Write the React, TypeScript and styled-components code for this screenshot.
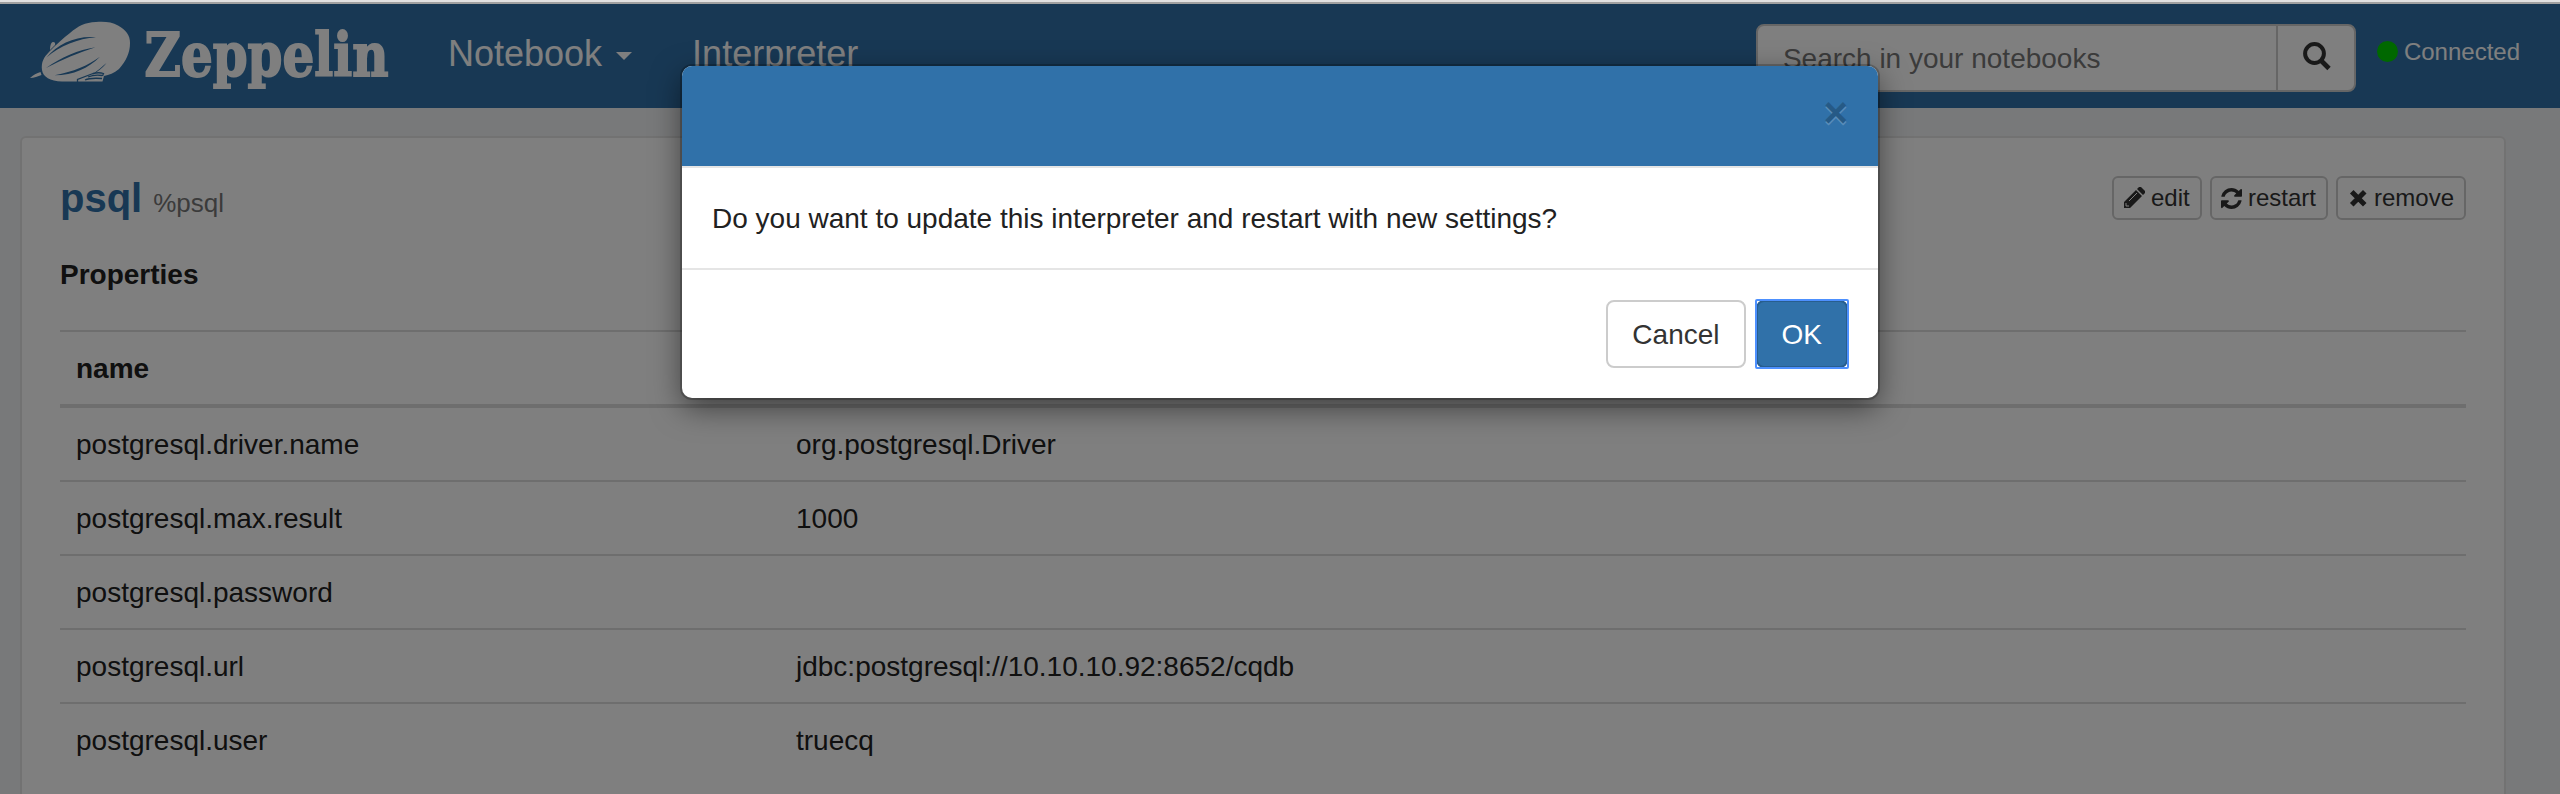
import React from 'react';
import styled, { createGlobalStyle } from 'styled-components';

const Global = createGlobalStyle`
  * { box-sizing: border-box; }
  html, body { margin: 0; padding: 0; background: #fff; }
  body { height: 794px; overflow: hidden; font-family: "Liberation Sans", Arial, sans-serif; font-size: 28px; line-height: 40px; color: #212121; }
  button, input { font: inherit; }
`;

const Page = styled.div`
  display: flex; flex-direction: column; height: 794px; overflow: hidden;
`;
const WindowEdge = styled.div`
  flex: none; height: 4px; background: #e1e1e1; border-bottom: 2px solid #a0a0a0;
`;
const Screen = styled.div`
  position: relative; flex: 1; min-height: 0; overflow: hidden; background: #f0f2f5;
`;
const Navbar = styled.nav`
  display: flex; align-items: flex-start; height: 104px; background: #3071a9; padding: 0 40px 0 30px;
`;
const Brand = styled.a`
  display: block; width: 360px; height: 90px; margin-top: 12px;
  svg { display: block; overflow: visible; }
`;
const NavLink = styled.a<{ $gap: number }>`
  display: flex; align-items: center; height: 100px; margin-left: ${p => p.$gap}px;
  font-size: 36px; color: #fff; white-space: nowrap;
`;
const Caret = styled.span`
  margin: 4px 0 0 14px; border: 8px solid transparent; border-top-color: #fff; border-bottom: 0;
`;
const Search = styled.div`
  display: flex; width: 600px; height: 68px; margin: 20px 0 0 auto; border: 2px solid #ccc; border-radius: 8px; background: #fff;
`;
const SearchInput = styled.input`
  flex: 1; min-width: 0; border: 0; outline: 0; background: none; padding: 0 25px; height: 65px; color: #777;
  &::placeholder { color: #777; opacity: 1; }
`;
const SearchButton = styled.button`
  display: flex; align-items: center; justify-content: center; width: 78px; border: 0; border-left: 2px solid #ccc; background: none; padding: 0;
`;
const Status = styled.div`
  display: flex; align-items: center; height: 40px; margin: 28px 0 0 21px; font-size: 24px; color: #fff;
`;
const Dot = styled.i`
  width: 21px; height: 21px; border-radius: 50%; background: #00d000; margin: 0 6px 1px 0;
`;
const Panel = styled.section`
  height: 800px; width: 2486px; margin: 28px 0 0 20px; padding: 36px 38px; border: 2px solid #e5e5e5; border-radius: 6px; background: #fff;
`;
const PanelHead = styled.header`
  display: flex; justify-content: space-between; align-items: flex-start; height: 81px;
`;
const Title = styled.h3`
  margin: 2px 0 0; font-size: 40px; line-height: 44px; color: #3071a9;
  small { margin-left: 11px; font-size: 26px; font-weight: 400; color: #777; }
`;
const Actions = styled.div`
  display: flex; gap: 8px; margin-top: 2px;
`;
const SmallButton = styled.button<{ $width: number; $space: number }>`
  display: flex; align-items: center; width: ${p => p.$width}px; height: 44px; padding: 0 0 0 9px;
  border: 2px solid #ccc; border-radius: 6px; background: #fff; color: #333; font-size: 24px; line-height: 36px; white-space: nowrap;
  svg { flex: none; margin-right: ${p => p.$space}px; }
`;
const SectionTitle = styled.h4`
  margin: 0 0 35px; font-size: 28px; line-height: 40px;
`;
const Table = styled.table`
  width: 100%; border-collapse: separate; border-spacing: 0; table-layout: fixed;
  th, td { text-align: left; padding: 17px 16px 15px; height: 74px; border-top: 2px solid #ddd; }
  th { height: 78px; border-bottom: 4px solid #ddd; }
  th:first-child { width: 720px; }
  tbody tr:first-child td { height: 72px; border-top: 0; }
`;
const Backdrop = styled.div`
  position: absolute; inset: 0; background: rgba(0, 0, 0, .5);
`;
const Dialog = styled.div`
  position: absolute; left: 682px; top: 62px; width: 1196px; height: 332px; overflow: hidden;
  border-radius: 10px; background: #fff;
  box-shadow: 0 0 0 2px rgba(0, 0, 0, .2), 0 10px 30px rgba(0, 0, 0, .5);
`;
const DialogHead = styled.div`
  display: flex; justify-content: flex-end; height: 102px; padding: 26px 30px; background: #3071a9; border-bottom: 2px solid #e5e5e5;
`;
const Close = styled.button`
  height: 42px; padding: 0; border: 0; background: none; font-size: 42px; line-height: 42px; font-weight: 700;
  color: #000; text-shadow: 0 2px 0 #fff; opacity: .2;
`;
const DialogBody = styled.div`
  height: 100px; padding: 31px 30px 29px;
`;
const DialogFoot = styled.div`
  display: flex; justify-content: flex-end; gap: 10px; padding: 30px; border-top: 2px solid #e5e5e5;
`;
const Button = styled.button`
  height: 68px; padding: 2px 24px 0; border: 2px solid #ccc; border-radius: 8px; background: #fff; color: #333;
`;
const PrimaryButton = styled(Button)`
  position: relative; border-color: #285e8e; background: #3071a9; color: #fff;
  &::after { content: ''; position: absolute; inset: -3px; border: 2px solid #4d90fe; border-radius: 2px; }
`;

const Logo = () => (
  <svg width="360" height="78" viewBox="30 16 360 78" fill="#fff">
    <path d="M42 70C41 62 44 57 49 52C57 44 63 38 70 33C78 26 85 22.500 96 22C105 21.500 112 22 118 25.500C126 30 130 35 130 43C130 53 126 61 119 69C114 73 109 75 104 76L102.500 81.500H62C50 81 43 77 42 70Z" />
    <path d="M30 78C33 75 37 73 40.500 72L41.500 75C38 76.500 34 78 30 78ZM50 50C50 46 51 42 53 42C55 42 55.500 43 55 45Z" />
    <g fill="#3071a9">
      <path d="M46.500 57.500C58 44 76 35.500 96 37.300C78 38.500 60 46 46.500 57.500ZM46 68C62 57 78 50 95.500 47.300C79 52.500 63 59.500 46 68ZM54.500 75.200C74 71.500 87 66 100 56.700C88 68.500 74 75 54.500 75.200ZM106.500 63C102 68.500 98 71.500 92 75C98 70 102 67 106.500 63Z" />
    </g>
    <g fill="none" stroke="#3071a9" strokeWidth="1.3">
      <path d="M77.500 82V79.500L93 73.500Q99 72 103.500 73.500L102.500 76M85 80C89 78 95 78 102 78.500M88 77Q94 74.500 102 75.500" />
    </g>
    <text x="144.500" y="75.500" fontFamily="DejaVu Serif" fontWeight="700" fontSize="60" textLength="244" lengthAdjust="spacingAndGlyphs" stroke="#fff" strokeWidth="1.800">Zeppelin</text>
  </svg>
);
const SearchIcon = () => (
  <svg width="30" height="32" viewBox="0 0 30 32" fill="none" stroke="#333">
    <circle cx="13.500" cy="11.500" r="9.400" strokeWidth="4" />
    <path d="M19.500 18L28 26.500" strokeWidth="4.800" />
  </svg>
);
const PencilIcon = () => (
  <svg width="22" height="22" viewBox="0 0 22 22" fill="#333">
    <path d="M1 21V15L13 3L19 9L7 21ZM14 2L16 0H18L22 4V6L20 8Z" />
    <path d="M3 16V19H6M6 14L14 6" fill="none" stroke="#fff" strokeWidth="1" />
  </svg>
);
const RefreshIcon = () => (
  <svg width="21" height="21" viewBox="0 0 1536 1536" fill="#333">
    <path d="M1511 928q0 5-1 7-64 268-268 434.500T764 1536q-146 0-282.500-55T238 1324l-129 129q-19 19-45 19t-45-19-19-45V960q0-26 19-45t45-19h448q26 0 45 19t19 45-19 45l-137 137q71 66 161 102t187 36q134 0 250-65t186-179q11-17 53-117 8-23 30-23h192q13 0 22.500 9.500t9.500 22.500zm25-800v448q0 26-19 45t-45 19h-448q-26 0-45-19t-19-45 19-45l138-138Q969 256 768 256q-134 0-250 65T332 500q-11 17-53 117-8 23-30 23H50q-13 0-22.500-9.500T18 608v-7q65-268 270-434.500T768 0q146 0 284 55.500T1297 212l130-129q19-19 45-19t45 19 19 45z" />
  </svg>
);
const TimesIcon = () => (
  <svg width="22" height="20" viewBox="-1 0 22 20">
    <path d="M5.500 5.500L15 15M15 5.500L5.500 15" stroke="#333" strokeWidth="5" strokeLinecap="square" />
  </svg>
);

const rows = [
  ['postgresql.driver.name', 'org.postgresql.Driver'],
  ['postgresql.max.result', '1000'],
  ['postgresql.password', ''],
  ['postgresql.url', 'jdbc:postgresql://10.10.10.92:8652/cqdb'],
  ['postgresql.user', 'truecq'],
];

export default function App() {
  return (
    <Page>
      <Global />
      <WindowEdge />
      <Screen>
        <Navbar>
          <Brand><Logo /></Brand>
          <NavLink $gap={58}>Notebook<Caret /></NavLink>
          <NavLink $gap={60}>Interpreter</NavLink>
          <Search>
            <SearchInput placeholder="Search in your notebooks" />
            <SearchButton><SearchIcon /></SearchButton>
          </Search>
          <Status><Dot />Connected</Status>
        </Navbar>
        <Panel>
          <PanelHead>
            <Title>psql<small>%psql</small></Title>
            <Actions>
              <SmallButton $width={90} $space={6}><PencilIcon />edit</SmallButton>
              <SmallButton $width={118} $space={6}><RefreshIcon />restart</SmallButton>
              <SmallButton $width={130} $space={5}><TimesIcon />remove</SmallButton>
            </Actions>
          </PanelHead>
          <SectionTitle>Properties</SectionTitle>
          <Table>
            <thead><tr><th>name</th><th>value</th></tr></thead>
            <tbody>
              {rows.map(([name, value]) => (
                <tr key={name}><td>{name}</td><td>{value}</td></tr>
              ))}
            </tbody>
          </Table>
        </Panel>
        <Backdrop />
        <Dialog role="dialog">
          <DialogHead><Close>×</Close></DialogHead>
          <DialogBody>Do you want to update this interpreter and restart with new settings?</DialogBody>
          <DialogFoot>
            <Button>Cancel</Button>
            <PrimaryButton>OK</PrimaryButton>
          </DialogFoot>
        </Dialog>
      </Screen>
    </Page>
  );
}
